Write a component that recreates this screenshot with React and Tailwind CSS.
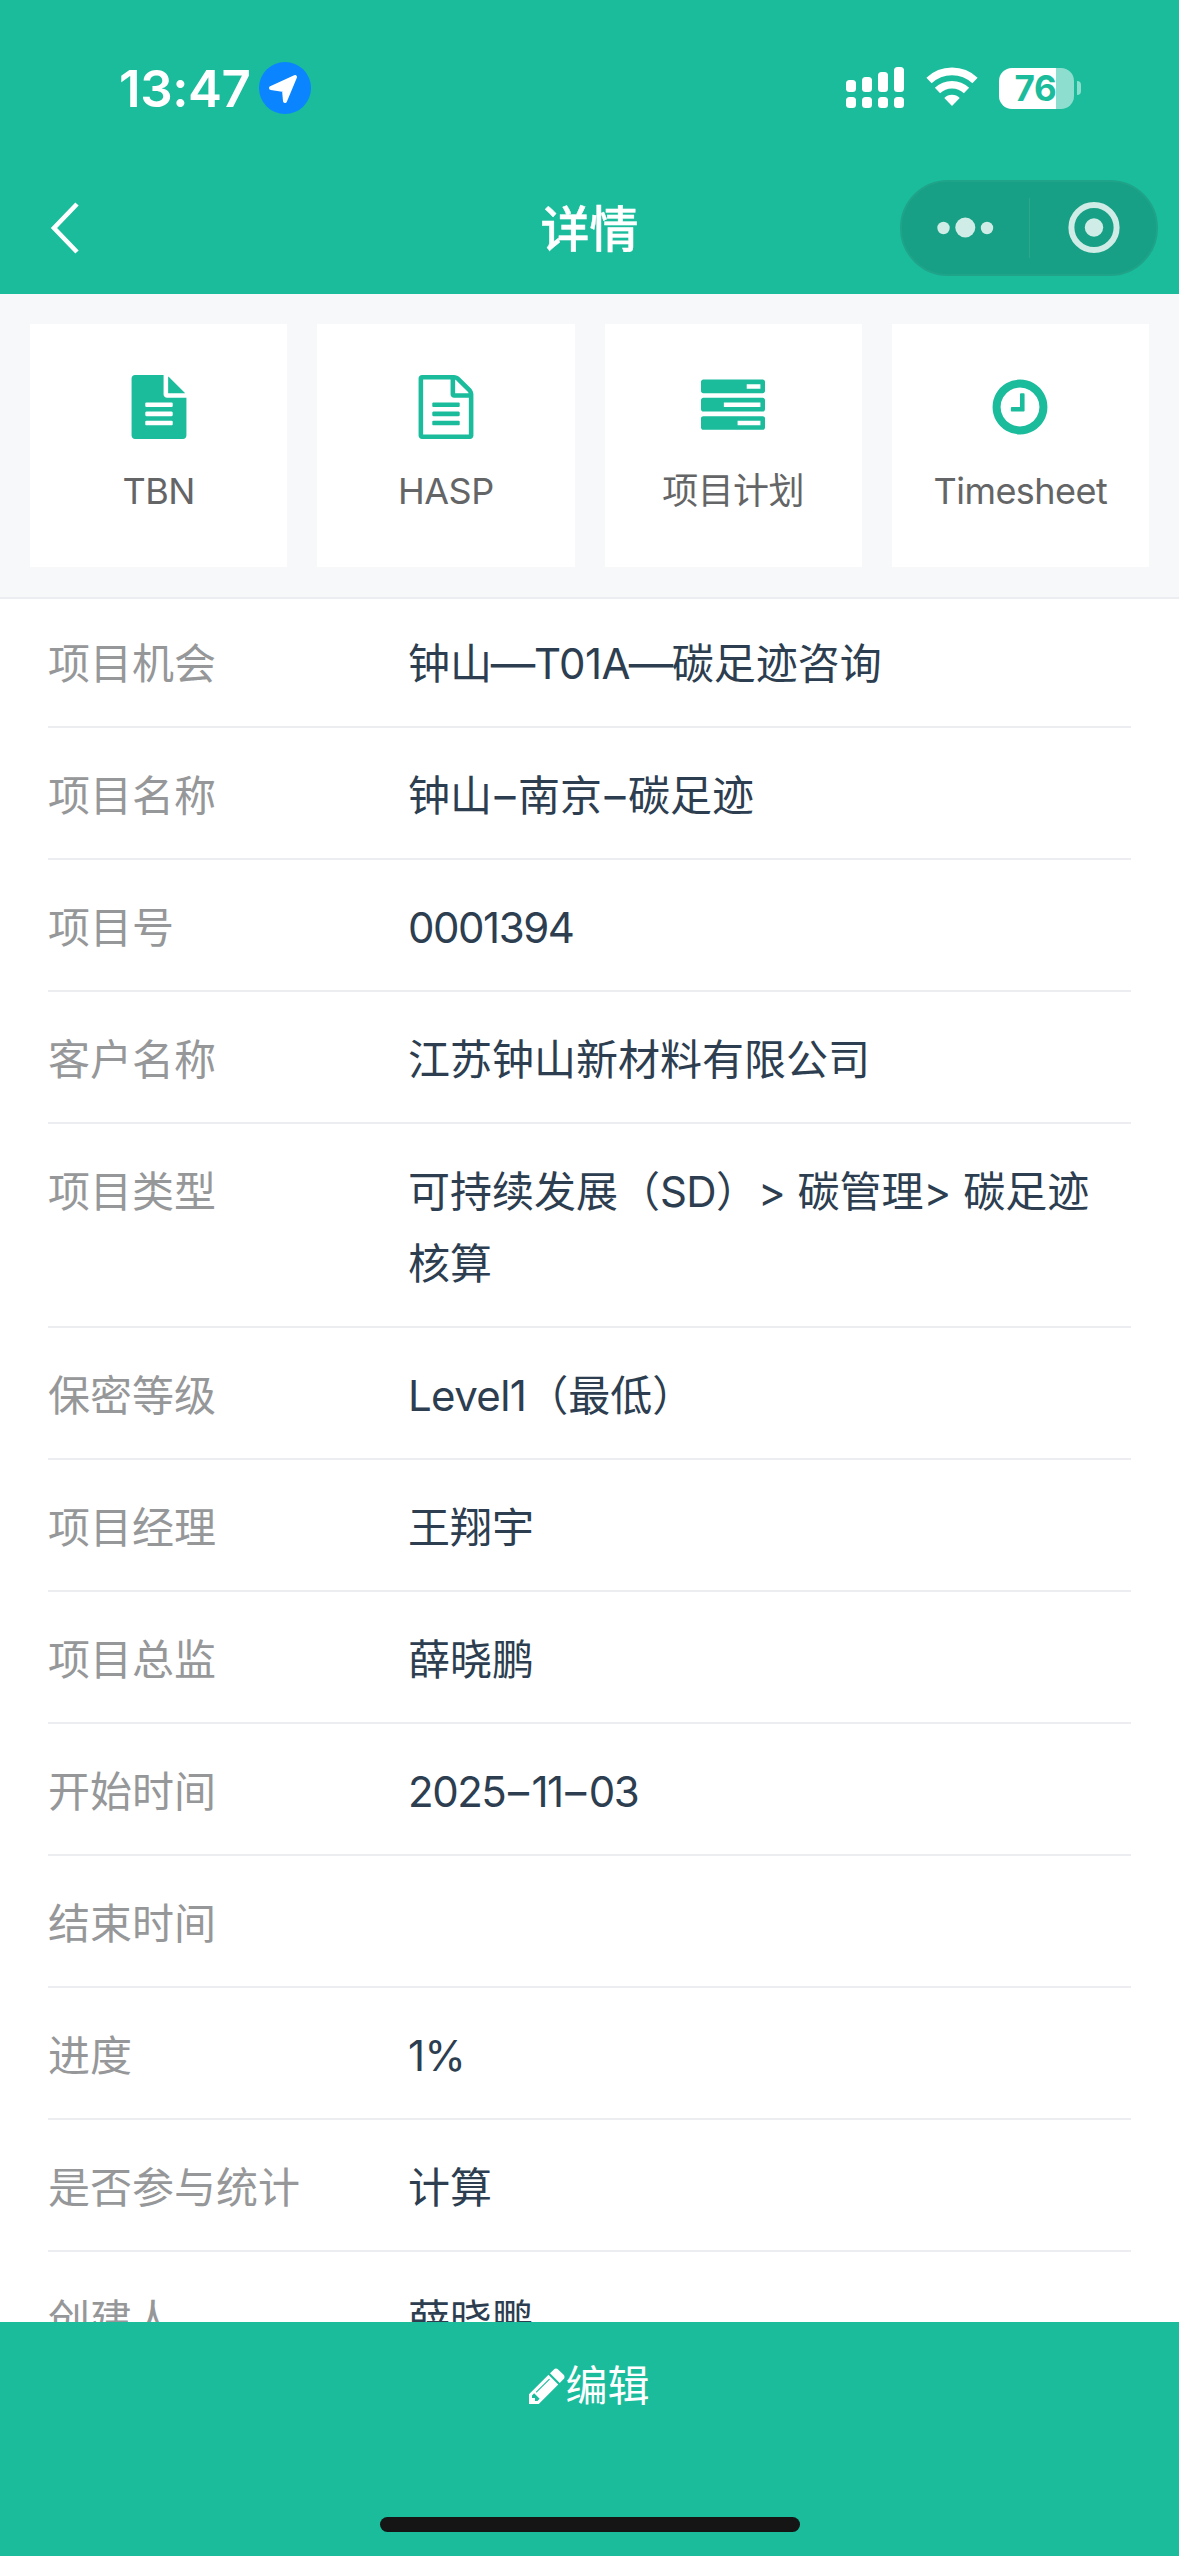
const TEAL = "#1abc9c";

const FILE_SOLID =
  "M1596 476q14 14 28 36h-472v-472q22 14 36 28zm-476 164h544v1056q0 40-28 68t-68 28h-1344q-40 0-68-28t-28-68v-1600q0-40 28-68t68-28h800v544q0 40 28 68t68 28zm160 736v-64q0-14-9-23t-23-9h-704q-14 0-23 9t-9 23v64q0 14 9 23t23 9h704q14 0 23-9t9-23zm0-256v-64q0-14-9-23t-23-9h-704q-14 0-23 9t-9 23v64q0 14 9 23t23 9h704q14 0 23-9t9-23zm0-256v-64q0-14-9-23t-23-9h-704q-14 0-23 9t-9 23v64q0 14 9 23t23 9h704q14 0 23-9t9-23z";
const FILE_OUTLINE =
  "M1596 380q28 28 48 76t20 88v1152q0 40-28 68t-68 28h-1344q-40 0-68-28t-28-68v-1600q0-40 28-68t68-28h896q40 0 88 20t76 48zm-444-244v376h376q-10-29-22-41l-313-313q-12-12-41-22zm384 1528v-1024h-416q-40 0-68-28t-28-68v-416h-768v1536h1280zm-1024-864q0-14 9-23t23-9h704q14 0 23 9t9 23v64q0 14-9 23t-23 9h-704q-14 0-23-9t-9-23v-64zm736 224q14 0 23 9t9 23v64q0 14-9 23t-23 9h-704q-14 0-23-9t-9-23v-64q0-14 9-23t23-9h704zm0 256q14 0 23 9t9 23v64q0 14-9 23t-23 9h-704q-14 0-23-9t-9-23v-64q0-14 9-23t23-9h704z";
const TASKS =
  "M1024 1408h640v-128h-640v128zm-384-512h1024v-128h-1024v128zm640-512h384v-128h-384v128zm512 832v256q0 26-19 45t-45 19h-1664q-26 0-45-19t-19-45v-256q0-26 19-45t45-19h1664q26 0 45 19t19 45zm0-512v256q0 26-19 45t-45 19h-1664q-26 0-45-19t-19-45v-256q0-26 19-45t45-19h1664q26 0 45 19t19 45zm0-512v256q0 26-19 45t-45 19h-1664q-26 0-45-19t-19-45v-256q0-26 19-45t45-19h1664q26 0 45 19t19 45z";
const CLOCK =
  "M1024 544v448q0 14-9 23t-23 9h-320q-14 0-23-9t-9-23v-64q0-14 9-23t23-9h224v-352q0-14 9-23t23-9h64q14 0 23 9t9 23zm416 352q0-148-73-273t-198-198-273-73-273 73-198 198-73 273 73 273 198 198 273 73 273-73 198-198 73-273zm224 0q0 209-103 385.5t-279.5 279.5-385.5 103-385.5-103-279.5-279.5-103-385.5 103-385.5 279.5-279.5 385.5-103 385.5 103 279.5 279.5 103 385.5z";
const PENCIL =
  "M491 1536l91-91-235-235-91 91v107h128v128h107zm523-928q0-22-22-22-10 0-17 7l-542 542q-7 7-7 17 0 22 22 22 10 0 17-7l542-542q7-7 7-17zm-54-192l416 416-832 832h-416v-416zm683 96q0 53-37 90l-166 166-416-416 166-165q36-38 90-38 53 0 91 38l235 234q37 39 37 91z";

const tabs = [
  { label: "TBN", icon: FILE_SOLID },
  { label: "HASP", icon: FILE_OUTLINE },
  { label: "项目计划", icon: TASKS },
  { label: "Timesheet", icon: CLOCK },
];

const rows = [
  ["项目机会", "钟山—T01A—碳足迹咨询"],
  ["项目名称", "钟山–南京–碳足迹"],
  ["项目号", "0001394"],
  ["客户名称", "江苏钟山新材料有限公司"],
  ["项目类型", "可持续发展（SD）> 碳管理> 碳足迹核算"],
  ["保密等级", "Level1（最低）"],
  ["项目经理", "王翔宇"],
  ["项目总监", "薛晓鹏"],
  ["开始时间", "2025–11–03"],
  ["结束时间", ""],
  ["进度", "1%"],
  ["是否参与统计", "计算"],
  ["创建人", "薛晓鹏"],
];

// Dashes get fixed advances; Latin words and numbers are tracked tighter than the CJK text.
function Mixed({ text }) {
  return text.split(/([—–]|[0-9A-Za-z%]+)/).map((part, i) => {
    if (part === "—") {
      return (
        <span key={i} className="inline-block w-[42px] scale-x-[1.06] text-center leading-none">
          {part}
        </span>
      );
    }
    if (part === "–") {
      return (
        <span key={i} className="inline-block w-[26px] text-center leading-none">
          {part}
        </span>
      );
    }
    if (/^\d+$/.test(part)) {
      return (
        <span key={i} className="tracking-[-0.035em]">
          {part}
        </span>
      );
    }
    return i % 2 ? (
      <span key={i} className="tracking-[-0.015em]">
        {part}
      </span>
    ) : (
      part
    );
  });
}

function StatusBar() {
  const bars = [
    [6, 80, 12],
    [22, 77, 15],
    [38, 72, 20],
    [54, 67, 25],
  ];
  return (
    <div className="flex h-[176px] items-center justify-between pr-[98px] pl-[119px]">
      <div className="flex items-center gap-[8px]">
        <span className="w-[132px] text-[51px] leading-none font-semibold tracking-[-0.008em] whitespace-nowrap">
          13:47
        </span>
        <svg width="52" height="52" viewBox="0 0 52 52">
          <circle cx="26" cy="26" r="26" fill="#0a84ff" />
          <path d="M12 26 L36 15 L26 39 L25 28 Z" fill="#fff" stroke="#fff" strokeWidth="4" strokeLinejoin="round" />
        </svg>
      </div>
      <div className="flex items-center">
        <svg width="64" height="42" viewBox="6 67 64 42" className="mr-[16px]">
          {bars.map(([x, y, h]) => (
            <g key={x} fill="#fff">
              <rect x={x} y={y} width="10" height={h} rx="3.5" />
              <rect x={x} y="97" width="10" height="11" rx="3.5" />
            </g>
          ))}
        </svg>
        <svg width="52" height="42" viewBox="0 0 52 42" fill="none" stroke="#fff" strokeWidth="7.6">
          <path d="M3 13.5 A33.5 33.5 0 0 1 49 13.5" />
          <path d="M11.5 23.5 A21 21 0 0 1 40.5 23.5" />
          <path d="M26 39 L18.3 31 A11 11 0 0 1 33.7 31 Z" fill="#fff" stroke="none" />
        </svg>
        <div className="ml-[21px] flex h-[41px] w-[75px] items-center justify-center overflow-hidden rounded-[13px] bg-[linear-gradient(90deg,#fff_0_57px,#8ddece_57px)] pr-[2px] text-[35px] leading-none font-bold tracking-[-0.01em] text-[#1abc9c]">
          76
        </div>
        <div className="ml-[3px] h-[14px] w-[4px] rounded-r-full bg-[#8ddece]" />
      </div>
    </div>
  );
}

function NavBar() {
  return (
    <div className="grid h-[118px] grid-cols-3 pb-[10px]">
      <svg width="30" height="56" viewBox="0 0 30 56" className="mt-[24px] ml-[49px]" fill="none" stroke="#fff" strokeWidth="4.6">
        <path d="M28 4 L5 28 L28 52" />
      </svg>
      <h1 className="mt-[16px] text-center text-[49px] leading-[76px] font-medium [-webkit-text-stroke:0.4px_white]">详情</h1>
      <div className="mt-[4px] mr-[21px] flex h-[96px] w-[258px] items-center justify-self-end rounded-full border-2 border-[#1fa389] bg-[#17a085]">
        <svg width="254" height="92" viewBox="902 182 254 92" fill="#d0ece6">
          <circle cx="943.5" cy="228" r="6.2" />
          <circle cx="965.3" cy="227.5" r="10" />
          <circle cx="987" cy="228" r="6.2" />
          <rect x="1029" y="198" width="1" height="60" fill="#2ba78f" />
          <circle cx="1094" cy="227.5" r="22.6" fill="none" stroke="#d0ece6" strokeWidth="6" />
          <circle cx="1094" cy="227.5" r="9.2" />
        </svg>
      </div>
    </div>
  );
}

export default function App() {
  return (
    <div className="flex h-[2556px] w-[1179px] flex-col overflow-hidden bg-white font-[Inter,'Noto_Sans_CJK_SC',sans-serif]">
      <header className="h-[294px] shrink-0 bg-[#1abc9c] text-white">
        <StatusBar />
        <NavBar />
      </header>
      <nav className="grid h-[305px] shrink-0 grid-cols-4 gap-[30px] border-b-2 border-[#ebedf0] bg-[#f7f8fa] p-[30px]">
        {tabs.map((tab) => (
          <button key={tab.label} className="flex h-[243px] flex-col items-center bg-white pt-[51px]">
            <svg width="64" height="64" viewBox="0 0 1792 1792" fill={TEAL}>
              <path d={tab.icon} />
            </svg>
            <span className="mt-[25px] text-[36px] leading-[54px] tracking-[-0.015em] text-[#646566]">
              {tab.label}
            </span>
          </button>
        ))}
      </nav>
      <main className="-mt-[3px] min-h-0 flex-1 overflow-hidden px-[48px] text-[42px] leading-[72px]">
        {rows.map(([label, value]) => (
          <div key={label} className="flex min-h-[132px] border-b-2 border-[#ebedf0] pt-[32px] pb-[26px]">
            <div className="w-[360px] shrink-0 text-[#969799]">{label}</div>
            <div className="flex-1 pr-[24px] text-[#2c3e50]">
              <Mixed text={value} />
            </div>
          </div>
        ))}
      </main>
      <footer className="flex h-[234px] shrink-0 flex-col items-center justify-between bg-[#1abc9c] pb-[24px] text-white">
        <button className="mt-[28px] flex items-center text-[42px] leading-[72px]">
          <svg width="36" height="42" viewBox="128 0 1536 1792" fill="#fff">
            <path d={PENCIL} />
          </svg>
          编辑
        </button>
        <div className="h-[15px] w-[420px] rounded-full bg-[#151515]" />
      </footer>
    </div>
  );
}
